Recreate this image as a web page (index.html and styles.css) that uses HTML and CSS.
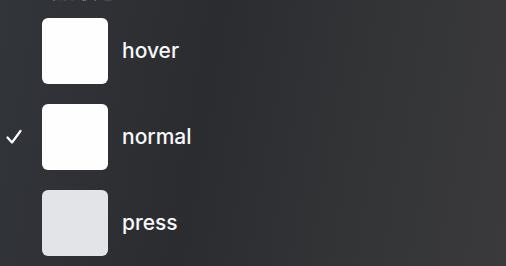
FILE: index.html
```html
<!DOCTYPE html>
<html lang="zh">
<head>
  <meta charset="UTF-8" />
  <title>状态</title>
  <link rel="stylesheet" href="styles.css">
</head>
<body>
<div class="panel">
  <div class="label">当前状态</div>
  <div class="list">
    <div class="row">
      <span class="check"></span>
      <div class="swatch"></div>
      <span class="name">hover</span>
    </div>
    <div class="row">
      <span class="check">
        <svg width="16" height="16" viewBox="0 0 16 16"><path d="M1.5 8.5 L6 13.5 L14.5 2" fill="none" stroke="#fff" stroke-width="2.2" stroke-linecap="round" stroke-linejoin="round"/></svg>
      </span>
      <div class="swatch"></div>
      <span class="name">normal</span>
    </div>
    <div class="row">
      <span class="check"></span>
      <div class="swatch press"></div>
      <span class="name">press</span>
    </div>
  </div>
</div>
</body>
</html>
```

FILE: styles.css
```css
* { margin: 0; padding: 0; box-sizing: border-box; }
body {
  width: 506px;
  height: 266px;
  overflow: hidden;
  font-family: Inter, "Noto Sans CJK SC", sans-serif;
  background: linear-gradient(100deg, #32353a 0%, #2b2c30 40%, #333436 70%, #3a3a3c 100%);
  color: white;
}

.panel {
  padding-left: 6px;
}

.label {
  margin-top: -18px;
  margin-left: 32px;
  height: 22px;
  font-size: 19px;
  line-height: 22px;
  color: #85878b;
  letter-spacing: 1px;
}

.list {
  display: flex;
  flex-direction: column;
  gap: 20px;
  margin-top: 14px;
}

.row {
  display: flex;
  align-items: center;
  height: 66px;
}

.check {
  width: 36px;
  display: flex;
  align-items: center;
}

.swatch {
  width: 66px;
  height: 66px;
  border-radius: 6px;
  background: #fefefe;
}

.swatch.press { background: #e3e4e8; }

.name {
  margin-left: 14px;
  font-size: 21px;
  font-weight: 500;
  color: #f8f8f8;
  margin-top: -2px;
}
```
